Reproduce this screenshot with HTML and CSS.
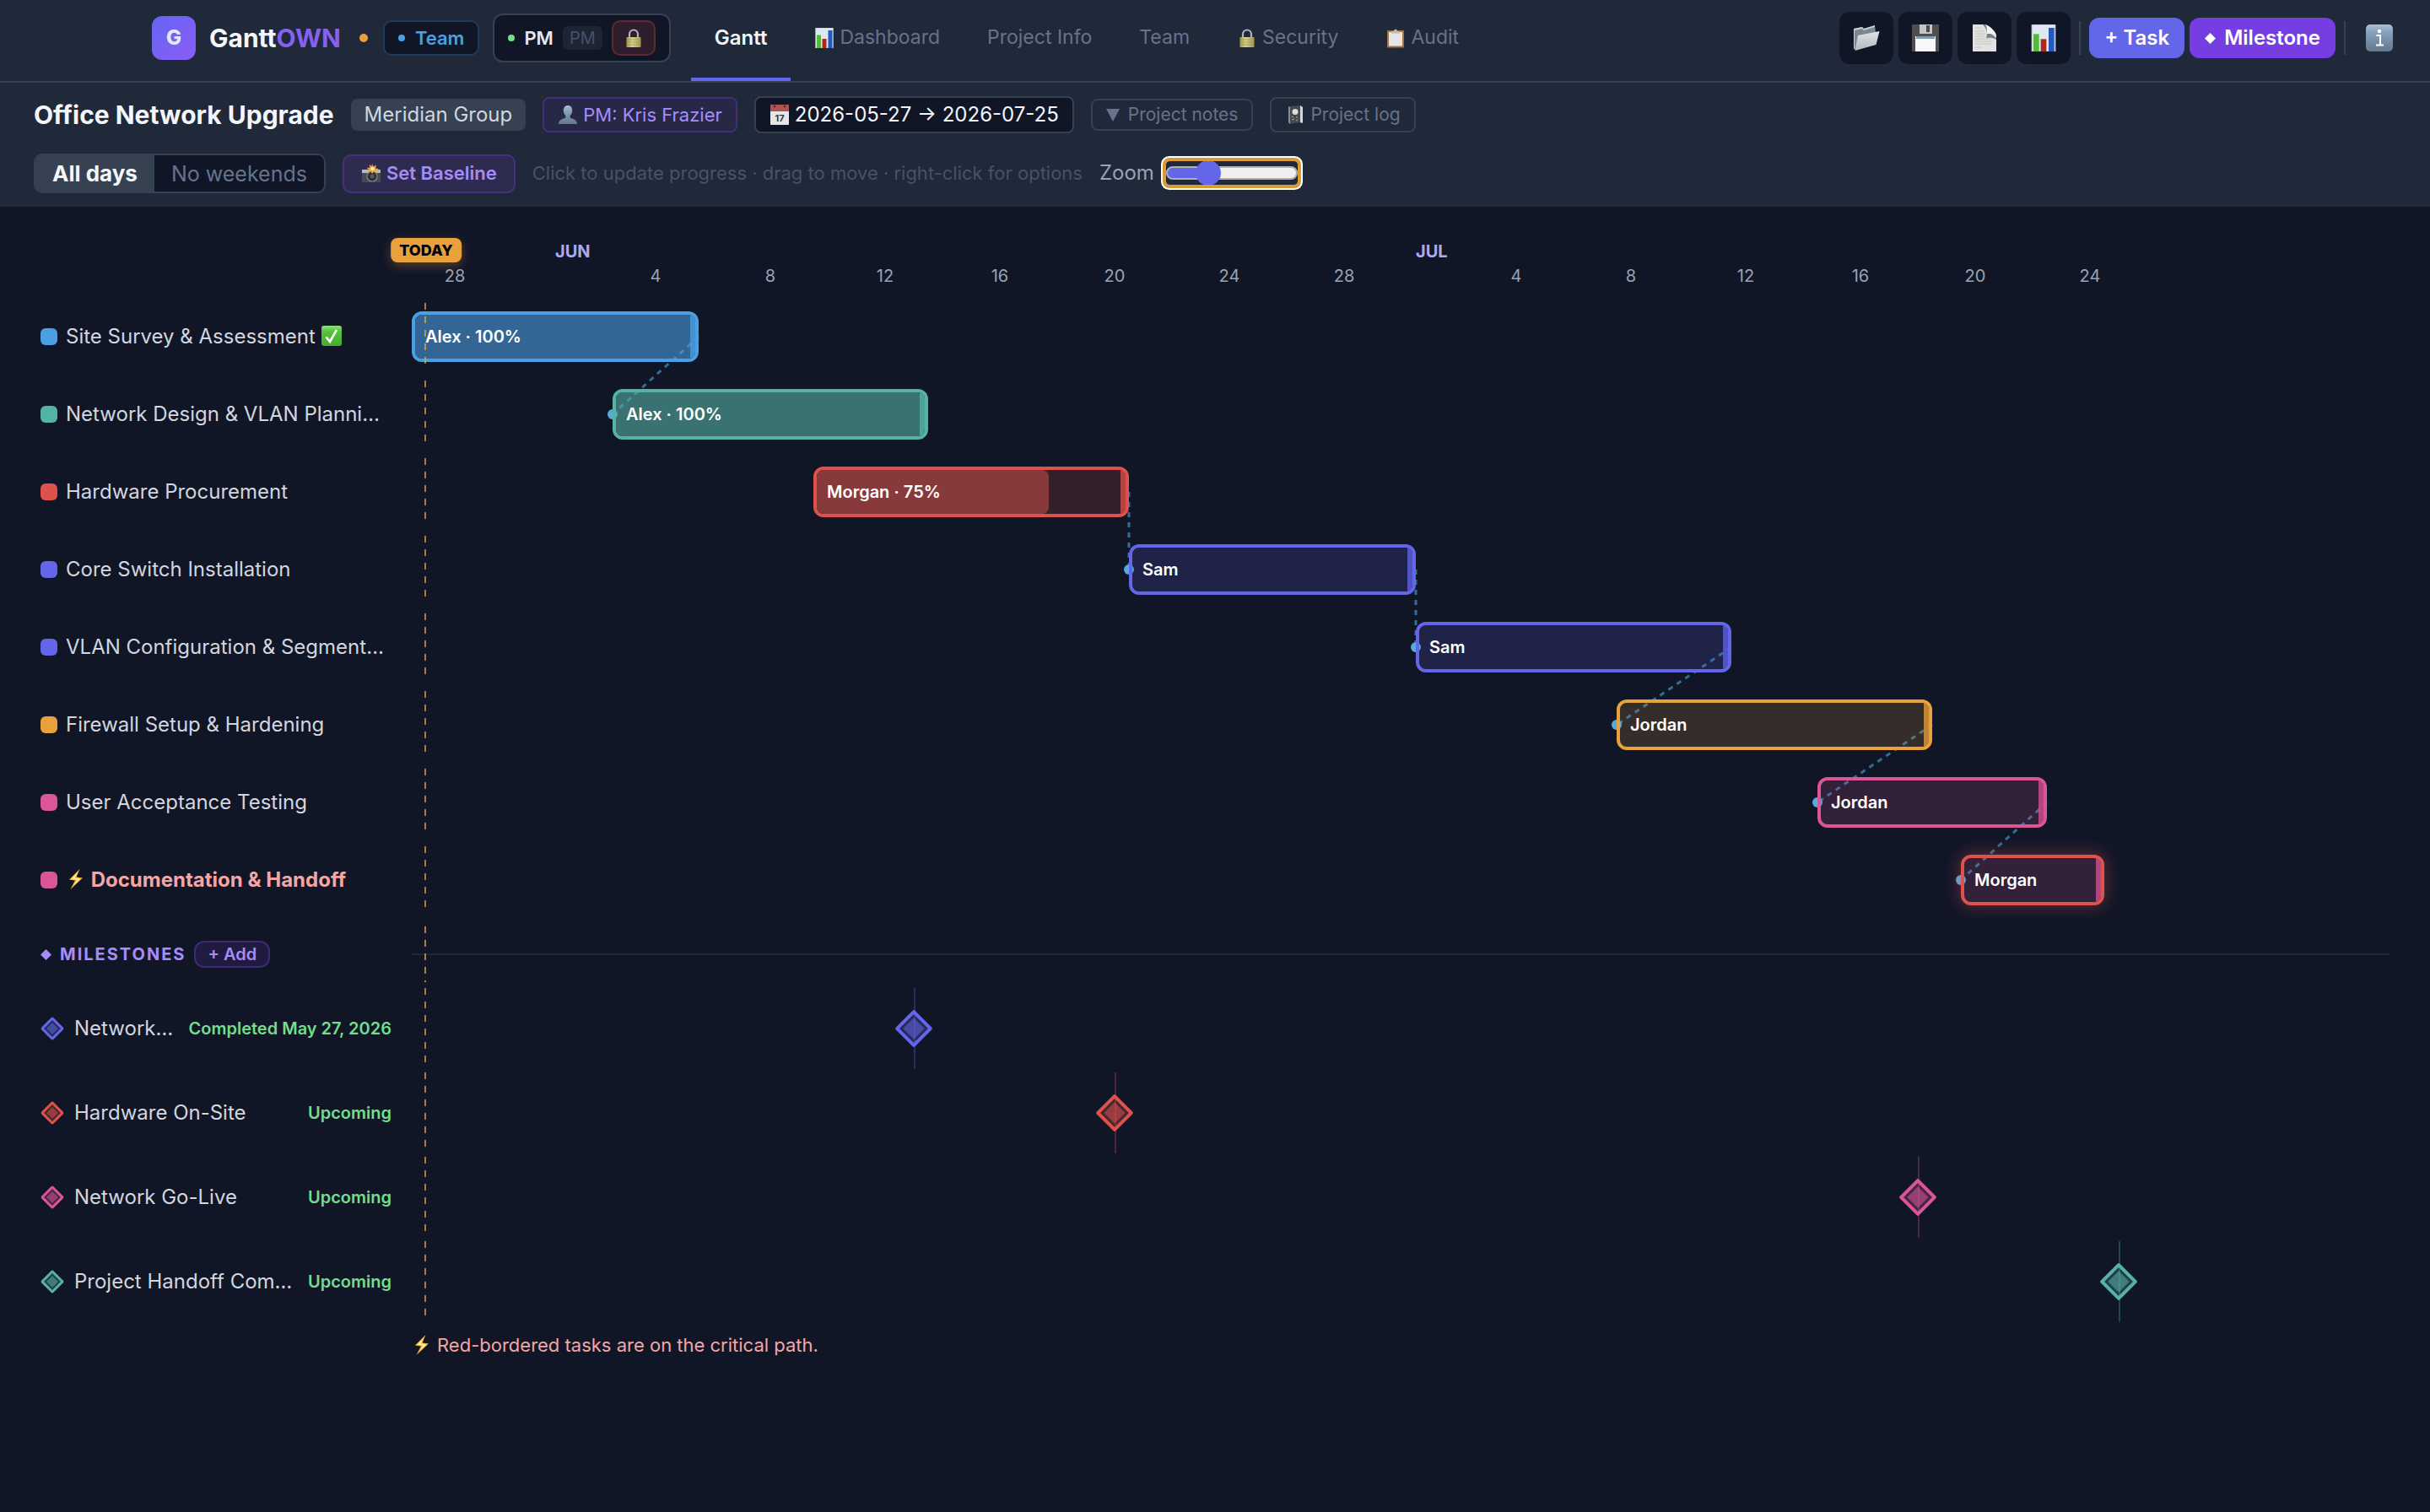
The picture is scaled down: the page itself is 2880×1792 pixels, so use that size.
FILE: index.html
```html
<!DOCTYPE html>
<html lang="en">
<head>
    <meta charset="UTF-8">
    <title>GanttOWN - Office Network Upgrade</title>
    <link rel="stylesheet" href="styles.css">
</head>
<body>
    <!-- shared icons -->
    <svg class="sprite" aria-hidden="true">
        <defs>
            <linearGradient id="brass" x1="0" y1="0" x2="1" y2="0">
                <stop offset="0" stop-color="#a09a4e"/>
                <stop offset=".4" stop-color="#dcd592"/>
                <stop offset="1" stop-color="#a39a52"/>
            </linearGradient>
            <linearGradient id="steel" x1="0" y1="0" x2="0" y2="1">
                <stop offset="0" stop-color="#a9c0d4"/>
                <stop offset=".3" stop-color="#86a1bd"/>
                <stop offset="1" stop-color="#64788f"/>
            </linearGradient>
            <linearGradient id="folder" x1="0" y1="0" x2="0" y2="1">
                <stop offset="0" stop-color="#dfe3e6"/>
                <stop offset="1" stop-color="#b4b9be"/>
            </linearGradient>
            <linearGradient id="green" x1="0" y1="0" x2="0" y2="1">
                <stop offset="0" stop-color="#8fe07c"/>
                <stop offset=".3" stop-color="#55c13c"/>
                <stop offset="1" stop-color="#46ab30"/>
            </linearGradient>
        </defs>
        <symbol id="i-lock" viewBox="0 0 24 24">
            <path d="M7 12V7.500a5 5 0 0 1 10 0V12" fill="none" stroke="#a9b4c4" stroke-width="2.200"/>
            <rect x="3.500" y="11" width="17" height="12" rx="1" fill="url(#brass)"/>
            <path d="M3.500 14h17M3.500 17h17M3.500 20h17" stroke="#8e8745" stroke-width=".6"/>
        </symbol>
        <symbol id="i-chart" viewBox="0 0 24 24">
            <rect x="1.500" y="0" width="21" height="24" fill="#dfe7f2" stroke="#aab5c2" stroke-width=".6"/>
            <rect x="3" y="8.500" width="5" height="15.500" fill="#55b83c"/>
            <rect x="9.500" y="13" width="5" height="11" fill="#b0261c"/>
            <rect x="16.500" y="3" width="5" height="21" fill="#2459c0"/>
        </symbol>
        <symbol id="i-clip" viewBox="0 0 24 24">
            <rect x="2" y="3" width="20" height="20.500" rx="1" fill="#a8743a"/>
            <rect x="4" y="5" width="16" height="16.500" fill="#e6e6e6"/>
            <path d="M7 6.500V4h3a2 2.500 0 0 1 4 0h3v2.500z" fill="#b5b9be"/>
        </symbol>
        <symbol id="i-user" viewBox="0 0 24 24">
            <path d="M12 1c3.400 0 5.200 2.600 5.200 6 0 2.700-1.200 5-2.500 6v2.500c2.500 1.500 8.300 2 8.300 7.500H1c0-5.500 5.800-6 8.300-7.500V13C8 12 6.800 9.700 6.800 7c0-3.400 1.800-6 5.200-6z" fill="url(#steel)"/>
        </symbol>
        <symbol id="i-cal" viewBox="0 0 24 24">
            <rect x="1" y="0" width="22" height="24" rx="1" fill="#e6e6e6"/>
            <path d="M1 0h22v8H1z" fill="#ad5350"/>
            <circle cx="6" cy="2" r="1.200" fill="#4a2624"/>
            <circle cx="18" cy="2" r="1.200" fill="#4a2624"/>
            <text x="12" y="20" class="cal-day">17</text>
        </symbol>
        <symbol id="i-note" viewBox="0 0 24 24">
            <path d="M4 2l14-1v20l-12 2-2-2z" fill="#47484c"/>
            <path d="M18 1l3 2v19l-3-1z" fill="#d7d7d5"/>
            <path d="M4 2l2 1v20l-2-2z" fill="#8b8d92"/>
            <circle cx="12" cy="8.500" r="3.500" fill="#dcdcdc"/>
            <path d="M8 14l2 1M13 14l2 2M8 18l3-1M13 19l2-1" stroke="#a5a6aa" stroke-width="1"/>
        </symbol>
        <symbol id="i-camera" viewBox="0 0 24 24">
            <path d="M1 7h5l2-2h8l2 2h5v15H1z" fill="#494a4d"/>
            <path d="M1 7h22v4H1z" fill="#b8b9bb"/>
            <circle cx="13" cy="15" r="6" fill="#2c2d30" stroke="#85878a" stroke-width="1.200"/>
            <circle cx="13" cy="15" r="2.500" fill="#58595d"/>
            <path d="M13 0l1.500 3.500L18 1.500l-1 4 4 .5-3.500 2L19 11l-4-1.500L13 12l-1.500-3L8 10l1.500-3L6.500 5l4-.5L9.500 1l3 2z" fill="#f0a63c"/>
            <circle cx="13.500" cy="6" r="2" fill="#fff1b8"/>
        </symbol>
        <symbol id="i-check" viewBox="0 0 24 24">
            <rect width="24" height="24" rx="3" fill="url(#green)"/>
            <path d="M5.500 13.500l4.500 5.500L18 5" fill="none" stroke="#fff" stroke-width="2.600"/>
        </symbol>
        <symbol id="i-bolt" viewBox="0 0 24 24">
            <path d="M16.500 0L4 12.500l7 1L5.500 24 20 10.500l-7.500-1z" fill="#f2bd49"/>
            <path d="M14 4L7 11.500l6.500 1L9.500 19l7.500-7.500-6.500-1z" fill="#fff3ad"/>
        </symbol>
        <symbol id="i-folder" viewBox="0 0 32 32">
            <path d="M1 5l10-2 2 2 13-4 1 8L3 30l-2-1z" fill="#7b8792"/>
            <path d="M1 5l10-2 2 2 13-4v2L13 7l-2-2-9 2v22l-1-1z" fill="#c9ced3"/>
            <path d="M6 13L31.500 8l-4 16L2.500 31z" fill="url(#folder)"/>
        </symbol>
        <symbol id="i-floppy" viewBox="0 0 32 32">
            <path d="M0 0h32v32H0z" fill="#4f4f50"/>
            <path d="M9 0h15v11H9z" fill="#c3c5c8"/>
            <path d="M17 1h4v8h-4z" fill="#4b4b4d"/>
            <path d="M4 14h24v18H4z" fill="#f7f7f7"/>
            <path d="M5 14h22v3H5z" fill="#6ea0d4"/>
        </symbol>
        <symbol id="i-page" viewBox="0 0 32 32">
            <path d="M2 0h15l13 13v19H2z" fill="#e1e1df"/>
            <path d="M14 0h3c3 3 2 6 3 8l10 8v2c-5-3-9-2-12-2 2-5 1-11-4-16z" fill="#7c7d7f"/>
            <path d="M17 0c2 2 2 6 2 11 4 0 8 0 11 2 0-4-8-12-13-13z" fill="#f4f4f2"/>
            <path d="M5 4h7M5 8h11M5 11h12M5 14h11M5 17h18M5 20h20M5 23h19M5 27h7" stroke="#c6c6c5" stroke-width="1"/>
        </symbol>
        <symbol id="i-info" viewBox="0 0 32 32">
            <rect width="32" height="32" rx="5" fill="url(#steel)"/>
            <circle cx="16" cy="8" r="2.200" fill="#fff"/>
            <path d="M12.500 13h4.500v11M12 24.500h9" fill="none" stroke="#fff" stroke-width="2"/>
        </symbol>
        <symbol id="i-diamond" viewBox="0 0 12 12">
            <path d="M6 0l6 6-6 6-6-6z" fill="currentColor"/>
        </symbol>
        <symbol id="i-down" viewBox="0 0 16 16">
            <path d="M0 1h16L8 16z" fill="currentColor"/>
        </symbol>
    </svg>

    <header class="topbar">
        <div class="logo">G</div>
        <div class="brand">Gantt<span>OWN</span></div>
        <span class="dot save-dot"></span>
        <button class="team-btn"><span class="dot"></span>Team</button>
        <div class="role">
            <span class="dot"></span>
            <strong>PM</strong>
            <span class="role-tag">PM</span>
            <button class="lock-btn" aria-label="Lock"><svg class="icon"><use href="#i-lock"/></svg></button>
        </div>
        <nav class="tabs">
            <a class="tab active" href="#gantt">Gantt</a>
            <a class="tab" href="#dashboard"><svg class="icon"><use href="#i-chart"/></svg>Dashboard</a>
            <a class="tab" href="#info">Project Info</a>
            <a class="tab" href="#team">Team</a>
            <a class="tab" href="#security"><svg class="icon"><use href="#i-lock"/></svg>Security</a>
            <a class="tab" href="#audit"><svg class="icon"><use href="#i-clip"/></svg>Audit</a>
        </nav>
        <div class="actions">
            <button class="tool" aria-label="Open"><svg class="icon-lg"><use href="#i-folder"/></svg></button>
            <button class="tool" aria-label="Save"><svg class="icon-lg"><use href="#i-floppy"/></svg></button>
            <button class="tool" aria-label="Export PDF"><svg class="icon-lg"><use href="#i-page"/></svg></button>
            <button class="tool" aria-label="Export Excel"><svg class="icon-lg"><use href="#i-chart"/></svg></button>
            <span class="sep"></span>
            <button class="primary">+ Task</button>
            <button class="primary violet"><svg class="gem"><use href="#i-diamond"/></svg>Milestone</button>
            <span class="sep"></span>
            <button class="about" aria-label="About"><svg class="icon-lg"><use href="#i-info"/></svg></button>
        </div>
    </header>

    <section class="subbar">
        <div class="subrow">
            <h1>Office Network Upgrade</h1>
            <span class="chip client">Meridian Group</span>
            <span class="chip manager"><svg class="icon"><use href="#i-user"/></svg>PM: Kris Frazier</span>
            <button class="chip dates"><svg class="icon"><use href="#i-cal"/></svg>2026-05-27 → 2026-07-25</button>
            <button class="chip ghost"><svg class="tri"><use href="#i-down"/></svg>Project notes</button>
            <button class="chip ghost log"><svg class="icon"><use href="#i-note"/></svg>Project log</button>
        </div>
        <div class="subrow">
            <div class="segment">
                <button class="on">All days</button>
                <button>No weekends</button>
            </div>
            <button class="baseline"><svg class="icon"><use href="#i-camera"/></svg>Set Baseline</button>
            <span class="hint">Click to update progress · drag to move · right-click for options</span>
            <div class="zoom">
                <label for="zoom">Zoom</label>
                <input type="range" id="zoom" min="0" max="100" value="27">
            </div>
        </div>
    </section>

    <main class="gantt">
        <div class="row scale">
            <div></div>
            <div class="days">
                <span class="today">TODAY</span>
                <span class="month" style="grid-column: 6 / span 4">JUN</span>
                <span class="month" style="grid-column: 36 / span 4">JUL</span>
                <span class="day" style="grid-column: 2">28</span>
                <span class="day" style="grid-column: 9">4</span>
                <span class="day" style="grid-column: 13">8</span>
                <span class="day" style="grid-column: 17">12</span>
                <span class="day" style="grid-column: 21">16</span>
                <span class="day" style="grid-column: 25">20</span>
                <span class="day" style="grid-column: 29">24</span>
                <span class="day" style="grid-column: 33">28</span>
                <span class="day" style="grid-column: 39">4</span>
                <span class="day" style="grid-column: 43">8</span>
                <span class="day" style="grid-column: 47">12</span>
                <span class="day" style="grid-column: 51">16</span>
                <span class="day" style="grid-column: 55">20</span>
                <span class="day" style="grid-column: 59">24</span>
            </div>
        </div>

        <div class="tasks">
            <!-- dependency links, one day = 34 units, one row = 92 units -->
            <svg class="links" viewBox="0 0 2040 724" width="2040" height="724">
                <path d="M340 40L238 132M850 224V316M1190 316V408M1564 408L1428 500M1802 500L1666 592M1938 592L1836 684"/>
                <circle cx="238" cy="132" r="6"/>
                <circle cx="850" cy="316" r="6"/>
                <circle cx="1190" cy="408" r="6"/>
                <circle cx="1428" cy="500" r="6"/>
                <circle cx="1666" cy="592" r="6"/>
                <circle cx="1836" cy="684" r="6"/>
            </svg>
            <div class="row blue">
                <div class="label"><span class="swatch"></span><span class="name">Site Survey &amp; Assessment <svg class="icon"><use href="#i-check"/></svg></span></div>
                <div class="days track"><div class="bar" style="grid-column: 1 / span 10"><div class="fill" style="width: 100%"></div><span>Alex · 100%</span></div></div>
            </div>
            <div class="row teal">
                <div class="label"><span class="swatch"></span><span class="name">Network Design &amp; VLAN Planning</span></div>
                <div class="days track"><div class="bar" style="grid-column: 8 / span 11"><div class="fill" style="width: 100%"></div><span>Alex · 100%</span></div></div>
            </div>
            <div class="row red">
                <div class="label"><span class="swatch"></span><span class="name">Hardware Procurement</span></div>
                <div class="days track"><div class="bar" style="grid-column: 15 / span 11"><div class="fill" style="width: 75%"></div><span>Morgan · 75%</span></div></div>
            </div>
            <div class="row indigo">
                <div class="label"><span class="swatch"></span><span class="name">Core Switch Installation</span></div>
                <div class="days track"><div class="bar" style="grid-column: 26 / span 10"><span>Sam</span></div></div>
            </div>
            <div class="row indigo">
                <div class="label"><span class="swatch"></span><span class="name">VLAN Configuration &amp; Segmentation</span></div>
                <div class="days track"><div class="bar" style="grid-column: 36 / span 11"><span>Sam</span></div></div>
            </div>
            <div class="row amber">
                <div class="label"><span class="swatch"></span><span class="name">Firewall Setup &amp; Hardening</span></div>
                <div class="days track"><div class="bar" style="grid-column: 43 / span 11"><span>Jordan</span></div></div>
            </div>
            <div class="row pink">
                <div class="label"><span class="swatch"></span><span class="name">User Acceptance Testing</span></div>
                <div class="days track"><div class="bar" style="grid-column: 50 / span 8"><span>Jordan</span></div></div>
            </div>
            <div class="row pink critical">
                <div class="label"><span class="swatch"></span><span class="name"><svg class="icon"><use href="#i-bolt"/></svg> Documentation &amp; Handoff</span></div>
                <div class="days track"><div class="bar" style="grid-column: 55 / span 5"><span>Morgan</span></div></div>
            </div>
        </div>

        <div class="row ms-head">
            <div class="label">
                <h2><svg class="gem"><use href="#i-diamond"/></svg>MILESTONES</h2>
                <button class="add">+ Add</button>
            </div>
            <div class="track"><hr></div>
        </div>

        <div class="milestones">
            <div class="row indigo">
                <div class="label"><i class="marker small"></i><span class="name">Network Design Approved</span><span class="status">Completed May 27, 2026</span></div>
                <div class="days track"><div class="pin" style="grid-column: 18"><i class="marker"></i></div></div>
            </div>
            <div class="row red">
                <div class="label"><i class="marker small"></i><span class="name">Hardware On-Site</span><span class="status">Upcoming</span></div>
                <div class="days track"><div class="pin" style="grid-column: 25"><i class="marker"></i></div></div>
            </div>
            <div class="row pink">
                <div class="label"><i class="marker small"></i><span class="name">Network Go-Live</span><span class="status">Upcoming</span></div>
                <div class="days track"><div class="pin" style="grid-column: 53"><i class="marker"></i></div></div>
            </div>
            <div class="row teal">
                <div class="label"><i class="marker small"></i><span class="name">Project Handoff Complete</span><span class="status">Upcoming</span></div>
                <div class="days track"><div class="pin" style="grid-column: 60"><i class="marker"></i></div></div>
            </div>
        </div>

        <div class="row">
            <div></div>
            <p class="legend"><svg class="icon"><use href="#i-bolt"/></svg>Red-bordered tasks are on the critical path.</p>
        </div>
    </main>
</body>
</html>
```
FILE: styles.css
```css
:root {
    --bg: #111627;
    --panel: #202939;
    --line: #364152;
    --muted: #66738a;
    --violet: #a78bfa;
    --label-width: 440px;
    --day: 34px;
}

* {
    box-sizing: border-box;
}

body {
    margin: 0;
    min-height: 100vh;
    background: var(--bg);
    color: #d1d6df;
    font-family: Inter, "Liberation Sans", sans-serif;
    font-size: 24px;
    line-height: 1.2;
}

button {
    font: inherit;
    color: inherit;
    border: none;
    cursor: pointer;
    white-space: nowrap;
}

h1, h2, p, hr {
    margin: 0;
}

.sprite {
    position: absolute;
    width: 0;
    height: 0;
}

.icon {
    width: 24px;
    height: 24px;
    flex: none;
}

.icon-lg {
    width: 32px;
    height: 32px;
}

.gem {
    width: 13px;
    height: 13px;
}

.tri {
    width: 16px;
    height: 16px;
}

.cal-day {
    font: 700 11px Inter, sans-serif;
    text-anchor: middle;
    fill: #3a3a3a;
}

.dot {
    width: 8px;
    height: 8px;
    border-radius: 50%;
    background: #4ba0e4;
}

/* top bar */
.topbar {
    display: flex;
    align-items: center;
    height: 98px;
    padding: 0 30px 6px 180px;
    background: var(--panel);
    border-bottom: 2px solid var(--line);
}

.logo {
    width: 52px;
    height: 52px;
    margin-right: 16px;
    border-radius: 12px;
    background: linear-gradient(135deg, #6366f1, #8b5cf6);
    color: #e5e9f2;
    font-weight: 800;
    line-height: 52px;
    text-align: center;
}

.brand {
    color: #f3f6fb;
    font-size: 30px;
    font-weight: 700;
}

.brand span {
    color: #8660ee;
}

.save-dot {
    margin: 0 18px 0 22px;
    width: 10px;
    height: 10px;
    background: #e9a13b;
}

.team-btn {
    display: flex;
    align-items: center;
    gap: 12px;
    height: 42px;
    margin-right: 16px;
    padding: 0 16px;
    border: 2px solid #203a59;
    border-radius: 10px;
    background: var(--bg);
    color: #4ba0e4;
    font-size: 22px;
    font-weight: 600;
}

.role {
    display: flex;
    align-items: center;
    gap: 11px;
    height: 58px;
    padding: 0 16px;
    border: 2px solid var(--line);
    border-radius: 12px;
    background: var(--bg);
    color: #e5e9f2;
    font-size: 22px;
}

.role strong {
    font-weight: 600;
}

.role .dot {
    background: #73dd8b;
}

.role-tag {
    padding: 0 8px;
    border-radius: 6px;
    background: #1d2535;
    color: #465268;
    font-size: 20px;
    line-height: 28px;
}

.lock-btn {
    display: grid;
    place-items: center;
    width: 52px;
    height: 42px;
    padding: 0;
    border: 2px solid #5c2a33;
    border-radius: 10px;
    background: #2e1e2c;
}

.tabs {
    display: flex;
    align-self: stretch;
    margin: 0 0 -6px 24px;
}

.tab {
    display: flex;
    align-items: center;
    gap: 6px;
    padding: 0 28px 2px;
    border-bottom: 4px solid transparent;
    color: var(--muted);
    font-size: 23px;
    text-decoration: none;
    white-space: nowrap;
}

.tab.active {
    border-bottom-color: #6366f1;
    color: #f3f6fb;
    font-size: 24px;
    font-weight: 600;
}

.actions {
    display: flex;
    align-items: center;
    gap: 6px;
    margin-left: auto;
}

.tool {
    display: grid;
    place-items: center;
    width: 64px;
    height: 62px;
    padding: 0;
    border-radius: 12px;
    background: var(--bg);
}

.sep {
    width: 2px;
    height: 40px;
    margin: 0 4px;
    background: var(--line);
}

.primary {
    display: flex;
    align-items: center;
    gap: 10px;
    height: 48px;
    padding: 0 18px;
    border-radius: 12px;
    background: #6366e8;
    color: #fff;
    font-size: 24px;
    font-weight: 600;
}

.primary.violet {
    background: #763de2;
}

.about {
    display: grid;
    padding: 14px;
    background: none;
}

/* project bar */
.subbar {
    display: flex;
    flex-direction: column;
    gap: 24px;
    padding: 16px 40px;
    background: var(--panel);
}

.subrow {
    display: flex;
    align-items: center;
    gap: 20px;
}

h1 {
    color: #f3f6fb;
    font-size: 30px;
    font-weight: 700;
}

.chip {
    display: flex;
    align-items: center;
    gap: 6px;
    height: 38px;
    padding: 0 16px;
    border: 2px solid var(--line);
    border-radius: 8px;
    background: none;
    font-size: 24px;
}

.client {
    padding: 0 14px;
    background: var(--line);
}

.manager {
    height: 42px;
    border-color: #432d7c;
    background: #272746;
    color: var(--violet);
    font-size: 22px;
}

.dates {
    height: 44px;
    background: var(--bg);
    color: #f3f6fb;
}

.ghost {
    gap: 10px;
    color: var(--muted);
    font-size: 21px;
}

.log {
    gap: 6px;
    height: 42px;
}

.segment {
    display: flex;
    border: 2px solid var(--line);
    border-radius: 10px;
    overflow: hidden;
}

.segment button {
    height: 43px;
    padding: 0 20px;
    background: var(--bg);
    color: var(--muted);
    font-size: 25px;
}

.segment .on {
    background: var(--line);
    color: #f3f6fb;
    font-size: 26px;
    font-weight: 700;
}

.baseline {
    display: flex;
    align-items: center;
    gap: 6px;
    height: 46px;
    padding: 0 20px;
    border: 2px solid #46307f;
    border-radius: 10px;
    background: #2d2b4f;
    color: var(--violet);
    font-size: 22px;
    font-weight: 600;
}

.hint {
    color: #465268;
    font-size: 22px;
}

.zoom {
    display: flex;
    align-items: center;
    gap: 14px;
    color: #98a3b5;
}

/* slider with its focus ring */
.zoom input {
    appearance: none;
    width: 156px;
    height: 28px;
    margin: 0;
    border-radius: 4px;
    outline: 4px solid #d99a34;
    box-shadow: 0 0 0 6px #fff;
    background: var(--panel);
}

.zoom input::-webkit-slider-runnable-track {
    height: 16px;
    border: 2px solid #b2b2b2;
    border-radius: 8px;
    background: linear-gradient(90deg, #6366e8 30%, #efefef 30%);
}

.zoom input::-webkit-slider-thumb {
    appearance: none;
    width: 30px;
    height: 30px;
    margin-top: -9px;
    border-radius: 50%;
    background: #6366e8;
}

/* chart */
.gantt {
    padding: 37px 48px;
}

.row {
    display: grid;
    grid-template-columns: var(--label-width) 1fr;
}

.days {
    position: relative;
    display: grid;
    grid-template-columns: repeat(60, var(--day));
}

.scale {
    margin-bottom: 19px;
    font-size: 20px;
}

.month {
    grid-row: 1;
    color: #a5acf5;
    font-weight: 700;
    line-height: 32px;
}

.day {
    grid-row: 2;
    color: #98a3b5;
    line-height: 26px;
    text-align: center;
}

.today {
    position: absolute;
    left: calc(var(--day) / 2);
    transform: translateX(-50%);
    padding: 0 10px;
    border-radius: 8px;
    background: #e9a13b;
    box-shadow: 0 4px 12px rgba(233, 161, 59, 0.3);
    color: #000;
    font-size: 18px;
    font-weight: 800;
    line-height: 29px;
}

.tasks {
    position: relative;
    display: grid;
    gap: 12px;
}

.links {
    position: absolute;
    left: var(--label-width);
    top: 0;
    overflow: visible;
}

.links path {
    fill: none;
    stroke: #4ba8e0;
    stroke-width: 3;
    stroke-dasharray: 6;
    opacity: 0.6;
}

.links circle {
    fill: #55aae0;
}

.blue { --c: #4ba0e4; }
.teal { --c: #55b3a6; }
.red { --c: #de514c; }
.indigo { --c: #6366e8; }
.amber { --c: #e9a13b; }
.pink { --c: #db5597; }

.label {
    display: flex;
    align-items: center;
    gap: 10px;
    min-width: 0;
    padding-right: 32px;
}

.swatch {
    flex: none;
    width: 20px;
    height: 20px;
    border-radius: 6px;
    background: var(--c);
}

.name {
    flex: 1;
    overflow: hidden;
    text-overflow: ellipsis;
    white-space: nowrap;
}

.name .icon {
    vertical-align: -3px;
}

.track {
    position: relative;
    align-items: center;
    height: 80px;
}

.track::after {
    content: "";
    position: absolute;
    left: 15px;
    width: 2px;
    height: 100%;
    background: repeating-linear-gradient(#e9a13b 0 8px, transparent 8px 16px);
    opacity: 0.75;
}

.bar {
    position: relative;
    grid-row: 1;
    display: flex;
    align-items: center;
    height: 60px;
    padding-left: 12px;
    border: 4px solid var(--c);
    border-radius: 12px;
    background: color-mix(in srgb, var(--c) 17%, transparent);
    background-clip: padding-box;
    overflow: hidden;
    color: #fff;
    font-size: 20px;
    font-weight: 600;
}

.bar::after {
    content: "";
    position: absolute;
    right: 0;
    width: 6px;
    height: 100%;
    background: var(--c);
    opacity: 0.75;
}

.bar span {
    position: relative;
}

.fill {
    position: absolute;
    left: 0;
    height: 100%;
    border-radius: 8px;
    background: var(--c);
    opacity: 0.5;
}

.critical .name {
    color: #f3a6a5;
    font-weight: 700;
}

.critical .bar {
    border-color: #de514c;
    box-shadow: 0 0 20px rgba(222, 81, 76, 0.45);
}

/* milestones */
.ms-head {
    margin: 15px 0 7px;
}

.ms-head .track {
    display: grid;
    height: 66px;
}

.ms-head hr {
    border: none;
    border-top: 2px solid #202939;
}

h2 {
    display: flex;
    align-items: center;
    gap: 10px;
    color: var(--violet);
    font-size: 20px;
    font-weight: 700;
    letter-spacing: 2px;
}

.add {
    height: 32px;
    padding: 0 14px;
    border: 2px solid #3f2a75;
    border-radius: 12px;
    background: #201b41;
    color: var(--violet);
    font-size: 20px;
    font-weight: 600;
}

.milestones {
    display: grid;
    gap: 4px;
}

.milestones .track {
    height: 96px;
}

.milestones .label {
    padding-right: 24px;
}

.status {
    margin-left: 6px;
    color: #73dd8b;
    font-size: 20px;
    font-weight: 600;
}

.marker {
    display: grid;
    place-items: center;
    flex: none;
    width: 32px;
    height: 32px;
    border: 4px solid var(--c);
    border-radius: 2px;
    background: color-mix(in srgb, var(--c) 25%, var(--bg));
    transform: rotate(45deg);
}

.marker::before {
    content: "";
    width: 18px;
    height: 18px;
    background: var(--c);
    opacity: 0.55;
}

.marker.small {
    width: 20px;
    height: 20px;
    margin: 0 6px 0 4px;
    border-width: 3px;
}

.marker.small::before {
    width: 10px;
    height: 10px;
}

.pin {
    position: relative;
    grid-row: 1;
    display: grid;
    place-items: center;
    height: 96px;
}

.pin::after {
    content: "";
    position: absolute;
    left: 50%;
    width: 2px;
    height: 100%;
    background: var(--c);
    opacity: 0.3;
}

.legend {
    display: flex;
    align-items: center;
    gap: 6px;
    margin-top: 14px;
    color: #f3a6a5;
    font-size: 22px;
}
```
